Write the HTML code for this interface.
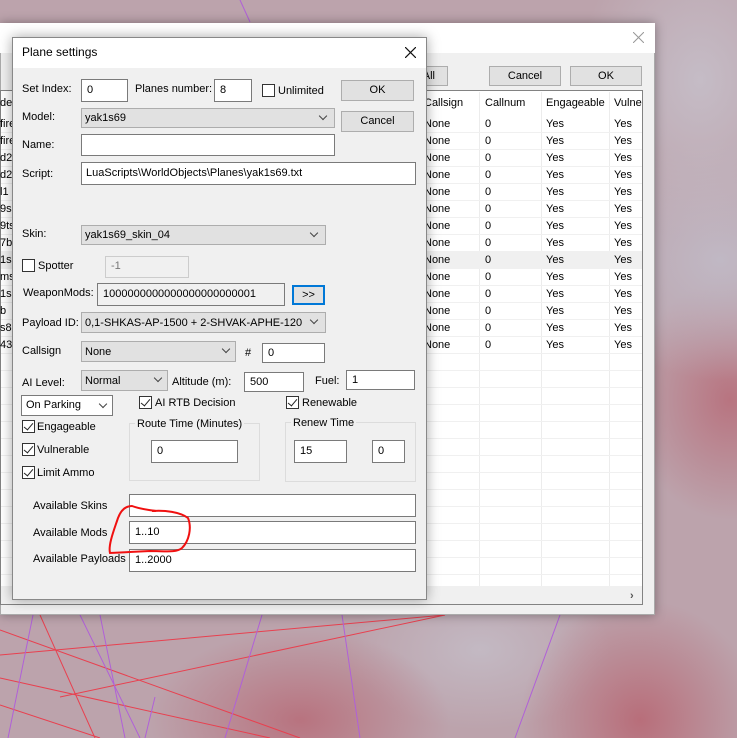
<!DOCTYPE html>
<html><head><meta charset="utf-8"><style>
*{margin:0;padding:0;box-sizing:border-box}
body{width:737px;height:738px;overflow:hidden;position:relative;font-family:"Liberation Sans",sans-serif;font-size:11px;color:#000;
background:
radial-gradient(ellipse 120px 160px at 700px 80px,#c5bcc6,transparent),
radial-gradient(ellipse 140px 120px at 720px 260px,#c0b8c4,transparent),
radial-gradient(ellipse 120px 120px at 640px 720px,#b86e7a,transparent),
radial-gradient(ellipse 150px 90px at 300px 720px,#b8737f,transparent),
radial-gradient(ellipse 130px 80px at 480px 650px,#c3b9c3,transparent),
radial-gradient(ellipse 100px 120px at 730px 400px,#b87480,transparent),
#bca3ac;}
.a{position:absolute;white-space:nowrap}
.t{position:absolute;white-space:nowrap;line-height:14px;height:14px}
.in{position:absolute;background:#fff;border:1px solid #7a7a7a}
.sel{position:absolute;background:#e1e1e1;border:1px solid #adadad}
.btn{position:absolute;background:#e1e1e1;border:1px solid #adadad;text-align:center}
.cb{position:absolute;width:13px;height:13px;border:1px solid #333;background:#fff}
.ck::after{content:"";position:absolute;left:3px;top:0px;width:4px;height:8px;border:solid #222;border-width:0 1.5px 1.5px 0;transform:rotate(40deg)}
.chev{position:absolute;width:6px;height:6px;border:solid #444;border-width:0 1px 1px 0;transform:rotate(45deg)}
.grp{position:absolute;border:1px solid #dcdcdc}
</style></head><body>

<svg class="a" style="left:0;top:0" width="737" height="738">
<g stroke="#e8404f" stroke-width="1" fill="none">
<line x1="0" y1="655" x2="445" y2="615"/>
<line x1="0" y1="630" x2="300" y2="738"/>
<line x1="40" y1="615" x2="95" y2="738"/>
<line x1="0" y1="678" x2="270" y2="738"/>
<line x1="60" y1="697" x2="445" y2="615"/>
<line x1="0" y1="705" x2="100" y2="738"/>
</g>
<g stroke="#b060d8" stroke-width="1" fill="none">
<line x1="33" y1="615" x2="8" y2="738"/>
<line x1="80" y1="615" x2="140" y2="738"/>
<line x1="100" y1="615" x2="125" y2="738"/>
<line x1="155" y1="697" x2="145" y2="738"/>
<line x1="262" y1="615" x2="225" y2="738"/>
<line x1="342" y1="615" x2="360" y2="738"/>
<line x1="560" y1="615" x2="515" y2="738"/>
<line x1="240" y1="0" x2="250" y2="22"/>
</g>
</svg>

<!-- background window -->
<div class="a" style="left:0;top:23px;width:655px;height:592px;background:#f0f0f0;border:1px solid #aaa;box-shadow:0 0 10px rgba(0,0,0,.35)"></div>
<div class="a" style="left:0;top:23px;width:655px;height:30px;background:#fff"></div>
<svg class="a" style="left:633px;top:32px" width="11" height="11"><path d="M0 0L11 11M11 0L0 11" stroke="#999" stroke-width="1"/></svg>
<div class="btn" style="left:400px;top:66px;width:48px;height:20px;line-height:18px;text-align:right;padding-right:12px">All</div>
<div class="btn" style="left:489px;top:66px;width:72px;height:20px;line-height:18px">Cancel</div>
<div class="btn" style="left:570px;top:66px;width:72px;height:20px;line-height:18px">OK</div>
<div class="a" style="left:0;top:90px;width:643px;height:515px;background:#fff;border:1px solid #828282"></div>
<div class="a" style="left:479px;top:92px;width:1px;height:495px;background:#ececec"></div>
<div class="a" style="left:541px;top:92px;width:1px;height:495px;background:#ececec"></div>
<div class="a" style="left:609px;top:92px;width:1px;height:495px;background:#ececec"></div>
<div class="a" style="left:1px;top:586px;width:641px;height:18px;background:#f0f0f0"></div>
<div class="t" style="left:630px;top:589px;color:#555;font-weight:bold">›</div>
<div id="rows"></div>
<div class="t" style="left:0;top:96px">del</div>
<div class="t" style="left:424px;top:96px">Callsign</div>
<div class="t" style="left:485px;top:96px">Callnum</div>
<div class="t" style="left:546px;top:96px">Engageable</div>
<div class="t" style="left:614px;top:96px;width:28px;overflow:hidden">Vulnerable</div>
<script>
var L=["fire","fire","d2","d2","l1","9s","9ts","7b","1s6","ms","1s","b","s8","43"];
var h="";
for(var i=0;i<14;i++){var y=116+17*i;
if(i==8)h+='<div class="a" style="left:1px;top:'+(y)+'px;width:641px;height:17px;background:#f0f0f0"></div>';
h+='<div class="a" style="left:1px;top:'+(y+16)+'px;width:641px;height:1px;background:#f0f0f0"></div>';
h+='<div class="t" style="left:0;top:'+(y+1)+'px">'+L[i]+'</div><div class="t" style="left:424px;top:'+(y+1)+'px">None</div><div class="t" style="left:485px;top:'+(y+1)+'px">0</div><div class="t" style="left:546px;top:'+(y+1)+'px">Yes</div><div class="t" style="left:614px;top:'+(y+1)+'px">Yes</div>';}
for(var j=14;j<28;j++){var y=116+17*j;h+='<div class="a" style="left:1px;top:'+(y+16)+'px;width:641px;height:1px;background:#f0f0f0"></div>';}
document.getElementById("rows").innerHTML=h;
</script>

<!-- dialog -->
<div class="a" style="left:12px;top:37px;width:415px;height:563px;background:#f0f0f0;border:1px solid #888;box-shadow:0 0 12px rgba(0,0,0,.35)"></div>
<div class="a" style="left:13px;top:38px;width:413px;height:30px;background:#fff"></div>
<div class="t" style="left:22px;top:45px;font-size:12px">Plane settings</div>
<svg class="a" style="left:405px;top:47px" width="11" height="11"><path d="M0 0L11 11M11 0L0 11" stroke="#111" stroke-width="1.2"/></svg>

<div class="t" style="left:22px;top:82px">Set Index:</div>
<div class="in" style="left:81px;top:79px;width:47px;height:23px"></div><div class="t" style="left:87px;top:83px">0</div>
<div class="t" style="left:135px;top:82px">Planes number:</div>
<div class="in" style="left:214px;top:79px;width:38px;height:23px"></div><div class="t" style="left:220px;top:83px">8</div>
<div class="cb" style="left:262px;top:84px"></div><div class="t" style="left:278px;top:84px">Unlimited</div>
<div class="btn" style="left:341px;top:80px;width:73px;height:21px;line-height:19px">OK</div>
<div class="btn" style="left:341px;top:111px;width:73px;height:21px;line-height:19px">Cancel</div>

<div class="t" style="left:22px;top:110px">Model:</div>
<div class="sel" style="left:81px;top:108px;width:254px;height:20px"></div><div class="t" style="left:85px;top:111px">yak1s69</div><div class="chev" style="left:320px;top:113px"></div>
<div class="t" style="left:22px;top:138px">Name:</div>
<div class="in" style="left:81px;top:134px;width:254px;height:22px"></div>
<div class="t" style="left:22px;top:167px">Script:</div>
<div class="in" style="left:81px;top:162px;width:335px;height:23px"></div><div class="t" style="left:86px;top:166px">LuaScripts\WorldObjects\Planes\yak1s69.txt</div>

<div class="t" style="left:22px;top:227px">Skin:</div>
<div class="sel" style="left:81px;top:225px;width:245px;height:20px"></div><div class="t" style="left:85px;top:228px">yak1s69_skin_04</div><div class="chev" style="left:311px;top:230px"></div>

<div class="cb" style="left:22px;top:259px"></div><div class="t" style="left:38px;top:259px">Spotter</div>
<div class="a" style="left:105px;top:256px;width:84px;height:22px;border:1px solid #ccc;background:#f0f0f0"></div><div class="t" style="left:111px;top:259px;color:#777">-1</div>

<div class="t" style="left:23px;top:286px">WeaponMods:</div>
<div class="a" style="left:97px;top:283px;width:188px;height:23px;border:1px solid #7a7a7a;background:#f0f0f0"></div><div class="t" style="left:103px;top:287px">1000000000000000000000001</div>
<div class="btn" style="left:292px;top:285px;width:33px;height:20px;border:2px solid #0078d7;line-height:16px">&gt;&gt;</div>

<div class="t" style="left:22px;top:316px">Payload ID:</div>
<div class="sel" style="left:81px;top:312px;width:245px;height:21px"></div><div class="t" style="left:85px;top:316px">0,1-SHKAS-AP-1500 + 2-SHVAK-APHE-120</div><div class="chev" style="left:311px;top:317px"></div>

<div class="t" style="left:22px;top:344px">Callsign</div>
<div class="sel" style="left:81px;top:341px;width:155px;height:21px"></div><div class="t" style="left:85px;top:345px">None</div><div class="chev" style="left:223px;top:346px"></div>
<div class="t" style="left:245px;top:346px">#</div>
<div class="in" style="left:262px;top:343px;width:63px;height:20px"></div><div class="t" style="left:268px;top:346px">0</div>

<div class="t" style="left:22px;top:376px">AI Level:</div>
<div class="sel" style="left:81px;top:370px;width:87px;height:21px"></div><div class="t" style="left:85px;top:374px">Normal</div><div class="chev" style="left:155px;top:375px"></div>
<div class="t" style="left:172px;top:375px">Altitude (m):</div>
<div class="in" style="left:244px;top:372px;width:60px;height:20px"></div><div class="t" style="left:250px;top:375px">500</div>
<div class="t" style="left:315px;top:374px">Fuel:</div>
<div class="in" style="left:346px;top:370px;width:69px;height:20px"></div><div class="t" style="left:352px;top:373px">1</div>

<div class="a" style="left:21px;top:395px;width:92px;height:21px;border:1px solid #7a7a7a;background:#fff"></div><div class="t" style="left:26px;top:398px">On Parking</div><div class="chev" style="left:100px;top:401px"></div>
<div class="cb ck" style="left:139px;top:396px"></div><div class="t" style="left:155px;top:396px">AI RTB Decision</div>
<div class="cb ck" style="left:286px;top:396px"></div><div class="t" style="left:302px;top:396px">Renewable</div>

<div class="cb ck" style="left:22px;top:420px"></div><div class="t" style="left:37px;top:420px">Engageable</div>
<div class="cb ck" style="left:22px;top:443px"></div><div class="t" style="left:37px;top:443px">Vulnerable</div>
<div class="cb ck" style="left:22px;top:466px"></div><div class="t" style="left:37px;top:466px">Limit Ammo</div>

<div class="grp" style="left:129px;top:423px;width:131px;height:58px"></div>
<div class="t" style="left:135px;top:417px;background:#f0f0f0;padding:0 2px">Route Time (Minutes)</div>
<div class="in" style="left:151px;top:440px;width:87px;height:23px"></div><div class="t" style="left:157px;top:444px">0</div>
<div class="grp" style="left:285px;top:422px;width:131px;height:60px"></div>
<div class="t" style="left:291px;top:416px;background:#f0f0f0;padding:0 2px">Renew Time</div>
<div class="in" style="left:294px;top:440px;width:53px;height:23px"></div><div class="t" style="left:300px;top:444px">15</div>
<div class="in" style="left:372px;top:440px;width:33px;height:23px"></div><div class="t" style="left:378px;top:444px">0</div>

<div class="t" style="left:33px;top:499px">Available Skins</div>
<div class="in" style="left:129px;top:494px;width:287px;height:23px"></div>
<div class="t" style="left:33px;top:526px">Available Mods</div>
<div class="in" style="left:129px;top:521px;width:287px;height:23px"></div><div class="t" style="left:135px;top:525px">1..10</div>
<div class="t" style="left:33px;top:552px">Available Payloads</div>
<div class="in" style="left:129px;top:549px;width:287px;height:23px"></div><div class="t" style="left:135px;top:553px">1..2000</div>

<svg class="a" style="left:0;top:0" width="737" height="738">
<path d="M152 511 C165 510 180 512 188 518 C192 528 189 541 182 548 C176 553 165 551 150 551 L110 553 C108 545 114 530 118 518 C121 510 126 506 132 506 C140 509 148 510 156 511" stroke="#f01010" stroke-width="2" fill="none"/>
</svg>
</body></html>
